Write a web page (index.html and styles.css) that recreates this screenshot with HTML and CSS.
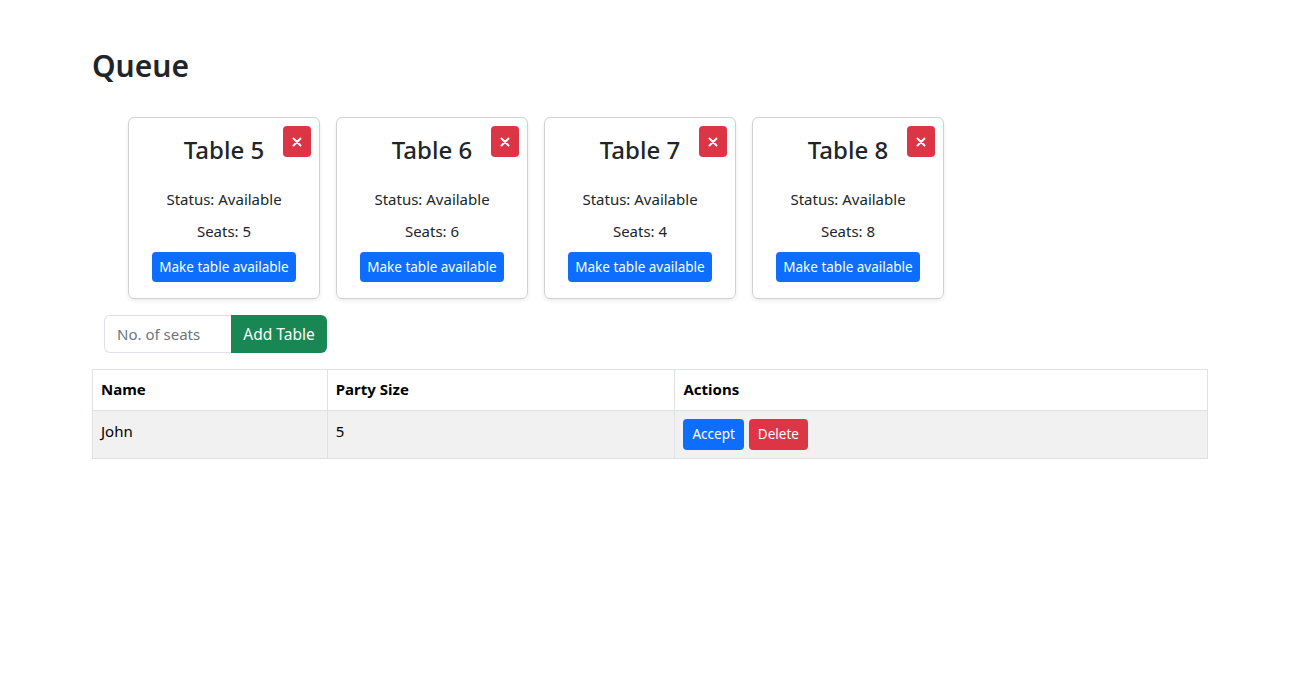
FILE: index.html
```html
<!DOCTYPE html>
<html lang="en">
<head>
<meta charset="utf-8">
<title>Queue</title>
<link rel="stylesheet" href="styles.css">
</head>
<body>
<div class="container">
  <h1 class="title">Queue</h1>
  <div class="cards">
    <div class="card">
      <button class="close" aria-label="Remove"><svg width="10" height="10" viewBox="0 0 10 10"><path d="M1.5 1.5l7 7M8.5 1.5l-7 7" stroke="#fff" stroke-width="2" stroke-linecap="round"/></svg></button>
      <h3 class="card-title">Table 5</h3>
      <p class="line">Status: Available</p>
      <p class="line">Seats: 5</p>
      <button class="btn btn-primary">Make table available</button>
    </div>
    <div class="card">
      <button class="close" aria-label="Remove"><svg width="10" height="10" viewBox="0 0 10 10"><path d="M1.5 1.5l7 7M8.5 1.5l-7 7" stroke="#fff" stroke-width="2" stroke-linecap="round"/></svg></button>
      <h3 class="card-title">Table 6</h3>
      <p class="line">Status: Available</p>
      <p class="line">Seats: 6</p>
      <button class="btn btn-primary">Make table available</button>
    </div>
    <div class="card">
      <button class="close" aria-label="Remove"><svg width="10" height="10" viewBox="0 0 10 10"><path d="M1.5 1.5l7 7M8.5 1.5l-7 7" stroke="#fff" stroke-width="2" stroke-linecap="round"/></svg></button>
      <h3 class="card-title">Table 7</h3>
      <p class="line">Status: Available</p>
      <p class="line">Seats: 4</p>
      <button class="btn btn-primary">Make table available</button>
    </div>
    <div class="card">
      <button class="close" aria-label="Remove"><svg width="10" height="10" viewBox="0 0 10 10"><path d="M1.5 1.5l7 7M8.5 1.5l-7 7" stroke="#fff" stroke-width="2" stroke-linecap="round"/></svg></button>
      <h3 class="card-title">Table 8</h3>
      <p class="line">Status: Available</p>
      <p class="line">Seats: 8</p>
      <button class="btn btn-primary">Make table available</button>
    </div>
  </div>
  <form class="add-form">
    <input class="seats-input" type="text" placeholder="No. of seats">
    <button type="button" class="add-btn">Add Table</button>
  </form>
  <table class="queue-table">
    <thead>
      <tr><th class="c1">Name</th><th class="c2">Party Size</th><th class="c3">Actions</th></tr>
    </thead>
    <tbody>
      <tr><td>John</td><td>5</td><td><div class="actions"><button class="btn btn-primary btn-row">Accept</button><button class="btn btn-danger btn-row">Delete</button></div></td></tr>
    </tbody>
  </table>
</div>
</body>
</html>
```
FILE: styles.css
```css
* { box-sizing: border-box; }
html, body { margin: 0; padding: 0; background: #fff; }
body {
  font-family: "Noto Sans", "Open Sans", sans-serif;
  font-size: 16px;
  line-height: 1.5;
  color: #212529;
}
.container {
  width: 1116px;
  margin-left: 92px;
  padding-top: 48px;
}
.title {
  font-size: 30px;
  font-weight: 600;
  line-height: 1.2;
  margin: 0 0 33px;
}
.cards {
  display: flex;
  gap: 16px;
  padding-left: 36px;
}
.card {
  position: relative;
  width: 192px;
  height: 182px;
  border: 1px solid #cfd1d3;
  border-radius: 6px;
  box-shadow: 0 2px 4px rgba(0,0,0,0.08);
  padding: 15px 16px 16px;
  display: flex;
  flex-direction: column;
  align-items: center;
  text-align: center;
}
.close {
  position: absolute;
  top: 8px;
  right: 8px;
  width: 28px;
  height: 31px;
  border: 0;
  border-radius: 4px;
  background: #dc3545;
  display: flex;
  align-items: center;
  justify-content: center;
  padding: 0;
}
.card-title {
  font-size: 24px;
  font-weight: 500;
  line-height: 1.4;
  margin: 0 0 21px;
}
.line {
  margin: 0 0 10px;
  font-size: 15px;
  line-height: 22px;
}
.btn {
  border: 0;
  border-radius: 4px;
  color: #fff;
  font-family: inherit;
  font-size: 13.5px;
  line-height: 1.5;
  padding: 5px 7px;
  height: 31px;
}
.btn-row { padding: 5px 9px; }
.btn-primary { background: #0d6efd; }
.btn-danger { background: #dc3545; }
.add-form {
  display: flex;
  margin: 16px 0 16px 12px;
}
.seats-input {
  width: 127px;
  height: 38px;
  border: 1px solid #dee2e6;
  border-right: 0;
  border-radius: 6px 0 0 6px;
  padding: 6px 12px;
  font-family: inherit;
  font-size: 15px;
  color: #212529;
  outline: none;
}
.seats-input::placeholder { color: #6c757d; }
.add-btn {
  width: 96px;
  height: 38px;
  border: 0;
  border-radius: 0 6px 6px 0;
  background: #198754;
  color: #fff;
  font-family: inherit;
  font-size: 15.5px;
}
.queue-table {
  width: 1116px;
  border-collapse: collapse;
  color: #000;
}
.queue-table th, .queue-table td {
  border: 1px solid #dee2e6;
  text-align: left;
  vertical-align: top;
  padding: 8px 8px;
  font-size: 15px;
}
.queue-table th { font-weight: 700; height: 41px; }
.queue-table td { height: 48px; padding-top: 9px; }
.queue-table tbody tr { background: #f1f1f1; }
.c1 { width: 235px; }
.c2 { width: 348px; }
.c3 { width: 533px; }
.actions { display: flex; gap: 5px; margin-top: -1px; }
```
